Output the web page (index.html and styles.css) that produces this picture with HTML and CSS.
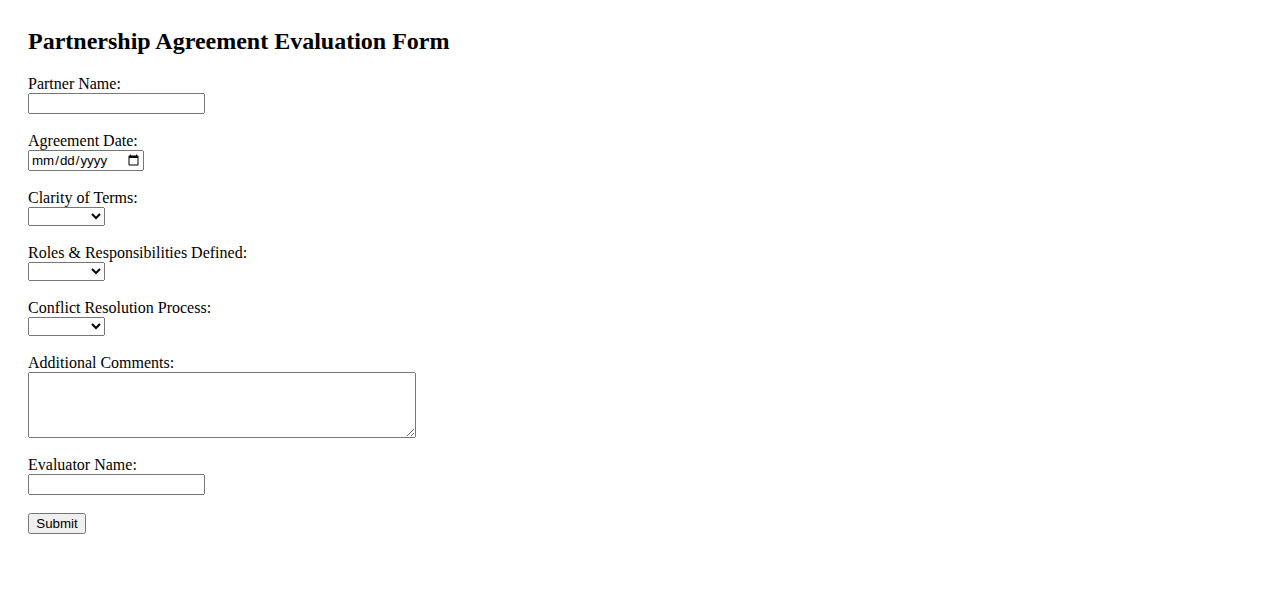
FILE: index.html
```html
<!DOCTYPE html>
<html lang="en">
<head>
<meta charset="utf-8">
<title>Partnership Agreement Evaluation Form</title>
<link rel="stylesheet" href="styles.css">
</head>
<body>
<div class="page">
<h2 class="title">Partnership Agreement Evaluation Form</h2>
<form class="form">
<label for="partner">Partner Name:</label><br>
<input type="text" id="partner" class="text"><br><br>
<label for="date">Agreement Date:</label><br>
<input type="date" id="date" class="date"><br><br>
<label for="clarity">Clarity of Terms:</label><br>
<select id="clarity" class="sel"><option value=""></option><option>Excellent</option><option>Good</option><option>Fair</option><option>Poor</option></select><br><br>
<label for="roles">Roles &amp; Responsibilities Defined:</label><br>
<select id="roles" class="sel"><option value=""></option><option>Excellent</option><option>Good</option><option>Fair</option><option>Poor</option></select><br><br>
<label for="conflict">Conflict Resolution Process:</label><br>
<select id="conflict" class="sel"><option value=""></option><option>Excellent</option><option>Good</option><option>Fair</option><option>Poor</option></select><br><br>
<label for="comments">Additional Comments:</label><br>
<textarea id="comments" class="area" rows="4" cols="50"></textarea><br><br>
<label for="evaluator">Evaluator Name:</label><br>
<input type="text" id="evaluator" class="text"><br><br>
<input type="submit" value="Submit" class="btn">
</form>
</div>
</body>
</html>
```
FILE: styles.css
```css
html, body {
  background: #ffffff;
}
body {
  margin: 0;
  padding: 28px;
  font-family: "Liberation Serif", "Times New Roman", serif;
  font-size: 16px;
  color: #000;
}
.title {
  margin: 0 0 20px 0;
  font-size: 24px;
  font-weight: bold;
}
.text, .date, .sel, .area, .btn {
  font-family: "Liberation Sans", Arial, sans-serif;
  font-size: 13.333px;
}
.text {
  box-sizing: border-box;
  width: 177px;
}
.date {
  box-sizing: border-box;
  width: 116px;
}
.area {
  font-family: "Liberation Mono", monospace;
  box-sizing: border-box;
  width: 388px;
  height: 66px;
  vertical-align: top;
}
.btn {
  min-width: 58px;
}
```
